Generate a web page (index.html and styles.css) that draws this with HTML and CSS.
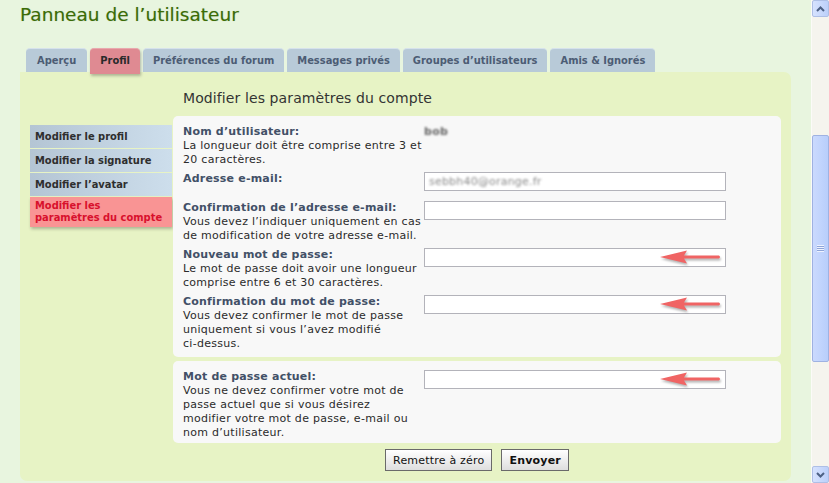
FILE: index.html
```html
<!DOCTYPE html>
<html lang="fr">
<head>
  <meta charset="UTF-8">
  <meta name="viewport" content="width=device-width, initial-scale=1.0">
  <title>Panneau de l'utilisateur</title>
  <link rel="stylesheet" href="styles.css">
</head>
<body>
  <div class="window">
    <div class="page">
      <h1 class="page-title">Panneau de l’utilisateur</h1>

      <ul class="tabs">
        <li class="tab">Aperçu</li>
        <li class="tab tab-active">Profil</li>
        <li class="tab">Préférences du forum</li>
        <li class="tab">Messages privés</li>
        <li class="tab">Groupes d’utilisateurs</li>
        <li class="tab">Amis &amp; Ignorés</li>
      </ul>

      <div class="panel">
        <ul class="menu">
          <li class="menu-item">Modifier le profil</li>
          <li class="menu-item">Modifier la signature</li>
          <li class="menu-item">Modifier l’avatar</li>
          <li class="menu-item menu-active">Modifier les paramètres du compte</li>
        </ul>

        <div class="main">
          <h2 class="main-title">Modifier les paramètres du compte</h2>

          <div class="box">
            <dl class="row">
              <dt><b>Nom d’utilisateur:</b><br>La longueur doit être comprise entre 3 et 20 caractères.</dt>
              <dd><span class="blurred blurred-name">bob</span></dd>
            </dl>
            <dl class="row">
              <dt><b>Adresse e-mail:</b></dt>
              <dd><div class="field"><span class="blurred">sebbh40@orange.fr</span></div></dd>
            </dl>
            <dl class="row">
              <dt><b>Confirmation de l’adresse e-mail:</b><br>Vous devez l’indiquer uniquement en cas de modification de votre adresse e&#8209;mail.</dt>
              <dd><div class="field"></div></dd>
            </dl>
            <dl class="row">
              <dt><b>Nouveau mot de passe:</b><br>Le mot de passe doit avoir une longueur comprise entre 6 et 30 caractères.</dt>
              <dd>
                <div class="field">
                  <svg class="arrow" width="64" height="16" viewBox="0 0 64 16"><path d="M1 8 L28 1.5 L25 6.4 L60 6.4 Q62 8 60 9.6 L25 9.6 L28 14.5 Z"/></svg>
                </div>
              </dd>
            </dl>
            <dl class="row">
              <dt><b>Confirmation du mot de passe:</b><br>Vous devez confirmer le mot de passe uniquement si vous l’avez modifié ci&#8209;dessus.</dt>
              <dd>
                <div class="field">
                  <svg class="arrow" width="64" height="16" viewBox="0 0 64 16"><path d="M1 8 L28 1.5 L25 6.4 L60 6.4 Q62 8 60 9.6 L25 9.6 L28 14.5 Z"/></svg>
                </div>
              </dd>
            </dl>
          </div>

          <div class="box box-last">
            <dl class="row">
              <dt><b>Mot de passe actuel:</b><br>Vous ne devez confirmer votre mot de passe actuel que si vous désirez modifier votre mot de passe, e&#8209;mail ou nom d’utilisateur.</dt>
              <dd>
                <div class="field">
                  <svg class="arrow" width="64" height="16" viewBox="0 0 64 16"><path d="M1 8 L28 1.5 L25 6.4 L60 6.4 Q62 8 60 9.6 L25 9.6 L28 14.5 Z"/></svg>
                </div>
              </dd>
            </dl>
          </div>

          <div class="buttons">
            <button class="button">Remettre à zéro</button>
            <button class="button button-main">Envoyer</button>
          </div>
        </div>
      </div>
    </div>

    <div class="scrollbar">
      <div class="scroll-btn">
        <svg width="9" height="6" viewBox="0 0 9 6"><path d="M1 5 L4.5 1.5 L8 5" fill="none" stroke="#4d6185" stroke-width="2"/></svg>
      </div>
      <div class="scroll-track">
        <div class="scroll-thumb"><span class="grip"></span></div>
      </div>
      <div class="scroll-btn">
        <svg width="9" height="6" viewBox="0 0 9 6"><path d="M1 1 L4.5 4.5 L8 1" fill="none" stroke="#4d6185" stroke-width="2"/></svg>
      </div>
    </div>
  </div>
</body>
</html>
```

FILE: styles.css
```css
body {
  margin: 0;
  font-family: "DejaVu Sans", Verdana, sans-serif;
  font-size: 11px;
  color: #2b2b2b;
  background-color: #e8f5df;
  overflow: hidden;
}

.window {
  display: flex;
  width: 829px;
  height: 483px;
}

.page {
  flex: 1;
  padding: 0 20px;
}

.page-title {
  margin: 4px 0 0 0;
  font-size: 18.5px;
  line-height: 22px;
  font-weight: normal;
  color: #3b6c06;
  text-shadow: 0 0 1px rgba(40, 80, 0, 0.3);
}

.tabs {
  display: flex;
  list-style: none;
  margin: 22px 0 0 6px;
  padding: 0;
  height: 24px;
}

.tab {
  height: 24px;
  line-height: 24px;
  padding: 0 10px;
  margin-right: 3px;
  font-family: "DejaVu Sans Condensed", "DejaVu Sans", sans-serif;
  font-weight: bold;
  color: #4c5c74;
  background-color: #b8cad8;
  border-top: 1px solid #d6e2ec;
  border-radius: 4px 4px 0 0;
  box-sizing: border-box;
}

.tab:first-child {
  padding: 0 11px;
}

.tab-active {
  position: relative;
  z-index: 1;
  height: 26px;
  background-color: #df8a92;
  border-top-color: #e9a8ae;
  color: #2a2a2a;
  box-shadow: 1px 2px 3px rgba(0, 0, 0, 0.25);
}

.panel {
  display: flex;
  align-items: flex-start;
  height: 409px;
  padding: 17px 10px 0 10px;
  box-sizing: border-box;
  background-color: #e7f3c5;
  border-radius: 0 7px 7px 7px;
}

.menu {
  list-style: none;
  width: 142px;
  margin: 36px 0 0 0;
  padding: 0;
}

.menu-item {
  padding: 5px 5px;
  margin-bottom: 1px;
  line-height: 13px;
  font-family: "DejaVu Sans Condensed", "DejaVu Sans", sans-serif;
  font-weight: bold;
  color: #2e2e2e;
  background: linear-gradient(to right, #b4c5d4, #cddeec);
}

.menu-active {
  padding: 3px 5px;
  line-height: 12px;
  color: #d8102c;
  background: #f99494;
  box-shadow: 1px 2px 3px rgba(0, 0, 0, 0.25);
}

.main {
  flex: 1;
  margin-left: 1px;
}

.main-title {
  margin: 0 0 9px 10px;
  font-size: 14px;
  line-height: 18px;
  font-weight: normal;
  letter-spacing: 0.1px;
  color: #333333;
}

.box {
  display: flex;
  flex-direction: column;
  gap: 5px;
  padding: 9px 10px 6px 10px;
  background-color: #f8f8f8;
  border-radius: 5px;
}

.box-last {
  margin-top: 4px;
  padding-bottom: 3px;
}

.row {
  display: flex;
  margin: 0;
  line-height: 14px;
  letter-spacing: 0.28px;
}

.row dt {
  width: 241px;
  padding-right: 1px;
  box-sizing: border-box;
}

.box-last .row dt {
  padding-right: 4px;
}

.row dt b {
  color: #425067;
  letter-spacing: 0.2px;
}

.row dd {
  margin: 0;
}

.field {
  position: relative;
  width: 302px;
  height: 19px;
  margin-bottom: 5px;
  padding-left: 4px;
  box-sizing: border-box;
  background-color: #ffffff;
  border: 1px solid #b3b3ba;
  line-height: 17px;
  letter-spacing: 0.2px;
}

.blurred {
  color: #8a8a8a;
  filter: blur(1.2px);
}

.blurred-name {
  display: inline-block;
  font-weight: bold;
  color: #666666;
}

.arrow {
  position: absolute;
  left: 234px;
  top: 0;
  fill: #f06464;
  filter: drop-shadow(1px 2px 1px rgba(0, 0, 0, 0.3));
}

.buttons {
  display: flex;
  justify-content: center;
  gap: 9px;
  margin-top: 6px;
}

.button {
  height: 22px;
  padding: 0 7px;
  font-family: "DejaVu Sans", Verdana, sans-serif;
  font-size: 11px;
  letter-spacing: 0.2px;
  color: #111111;
  background: linear-gradient(#ffffff, #dedede);
  border: 1px solid #6a6a6a;
}

.button-main {
  font-weight: bold;
}

.scrollbar {
  display: flex;
  flex-direction: column;
  width: 17px;
  background-color: #f5f4ee;
  border-left: 1px solid #fbfbf8;
}

.scroll-btn {
  display: flex;
  align-items: center;
  justify-content: center;
  height: 17px;
  box-sizing: border-box;
  background: linear-gradient(to right, #d6e2fe, #bcd0fa);
  border: 1px solid #aebfe6;
  border-radius: 2px;
}

.scroll-track {
  flex: 1;
  padding-top: 118px;
}

.scroll-thumb {
  display: flex;
  align-items: center;
  justify-content: center;
  height: 227px;
  box-sizing: border-box;
  background: linear-gradient(to right, #cbdafe, #b8cefb);
  border: 1px solid #9fb2e2;
  border-radius: 2px;
}

.grip {
  width: 7px;
  height: 7px;
  background: repeating-linear-gradient(#eef3ff 0, #eef3ff 1px, #8fa5d8 1px, #8fa5d8 2px);
}
```
